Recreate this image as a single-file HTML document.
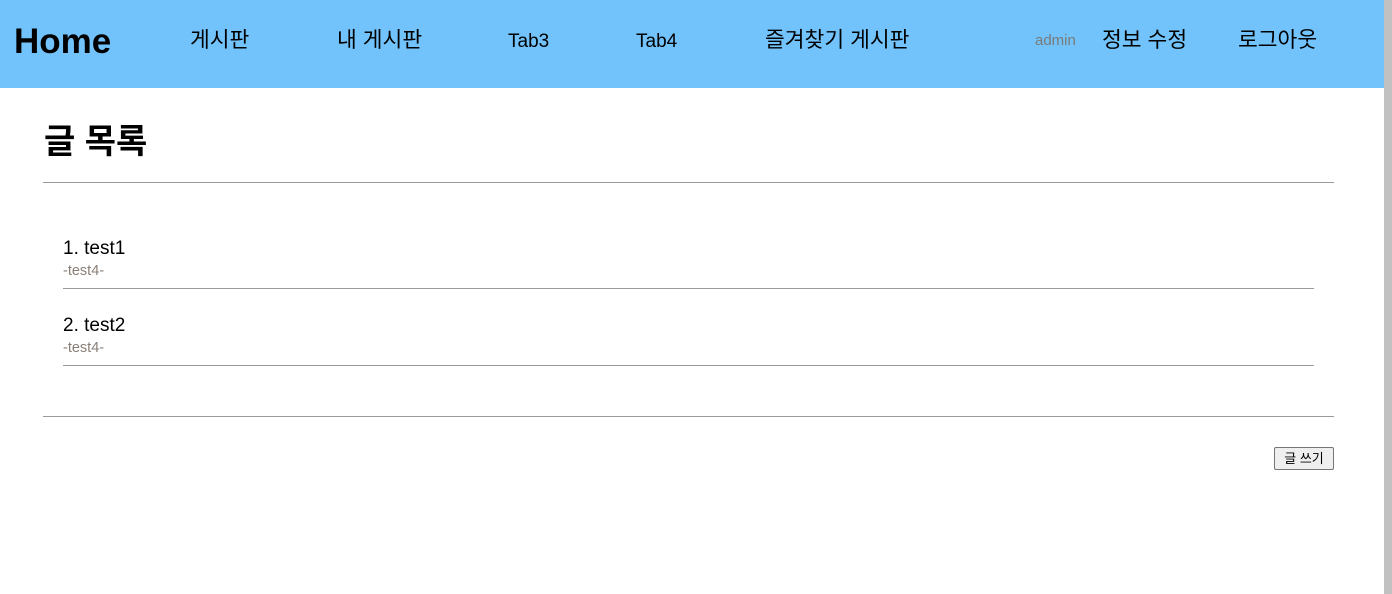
<!DOCTYPE html>
<html><head><meta charset="utf-8">
<style>
html,body{margin:0;padding:0;width:1392px;height:594px;overflow:hidden;background:#fff;font-family:"Liberation Sans","Noto Sans CJK KR",sans-serif;position:relative}
.hdr{position:absolute;left:0;top:0;width:1384px;height:88px;background:#72c3fc}
.sb{position:absolute;left:1384px;top:0;width:8px;height:594px;background:#c1c1c1}
.t{position:absolute;white-space:nowrap;line-height:1}
.nav{font-size:21.5px;color:#000;top:30px}
.hr{position:absolute;height:1px;background:#9a9a9a}
.btn{position:absolute;left:1274px;top:447px;width:58px;height:21px;border:1px solid #767676;border-radius:2px;background:#efefef;font-size:13px;text-align:center;line-height:21px}
</style></head><body>
<div class="hdr"></div>
<div class="sb"></div>
<div class="t" style="left:14px;top:24px;font-size:35px;font-weight:bold">Home</div>
<div class="t nav" style="left:190px">게시판</div>
<div class="t nav" style="left:337px">내 게시판</div>
<div class="t nav" style="left:508px;top:32px;font-size:19px">Tab3</div>
<div class="t nav" style="left:636px;top:32px;font-size:19px">Tab4</div>
<div class="t nav" style="left:765px">즐겨찾기 게시판</div>
<div class="t" style="left:1035px;top:33px;font-size:15px;color:#7a7a7a">admin</div>
<div class="t nav" style="left:1102px">정보 수정</div>
<div class="t nav" style="left:1238px">로그아웃</div>
<div class="t" style="left:44px;top:125px;font-size:34px;font-weight:bold">글 목록</div>
<div class="hr" style="left:43px;top:182px;width:1291px"></div>
<div class="t" style="left:63px;top:239px;font-size:19px">1. test1</div>
<div class="t" style="left:63px;top:264px;font-size:14.5px;color:#8a7f77">-test4-</div>
<div class="hr" style="left:63px;top:288px;width:1251px"></div>
<div class="t" style="left:63px;top:316px;font-size:19px">2. test2</div>
<div class="t" style="left:63px;top:341px;font-size:14.5px;color:#8a7f77">-test4-</div>
<div class="hr" style="left:63px;top:365px;width:1251px"></div>
<div class="hr" style="left:43px;top:416px;width:1291px"></div>
<div class="btn">글 쓰기</div>
</body></html>
